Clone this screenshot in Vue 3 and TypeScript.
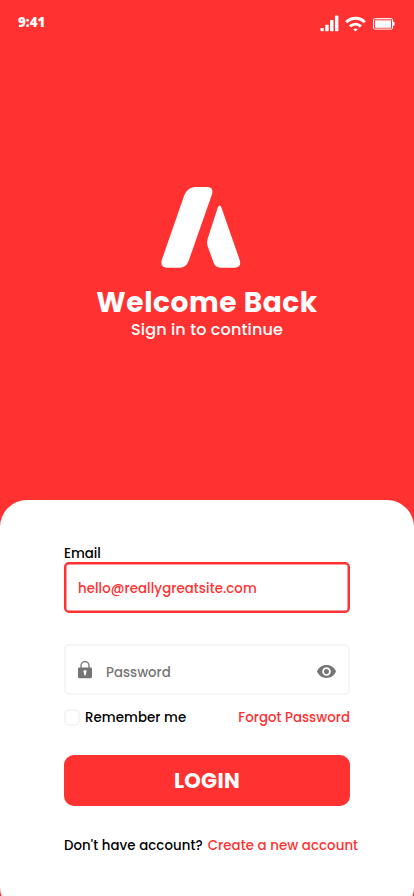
<script setup lang="ts">
import { ref } from 'vue'

const email = ref<string>('hello@reallygreatsite.com')
const remember = ref<boolean>(false)
</script>

<template>
  <main class="screen">
    <header class="status">
      <span class="time">9:41</span>
      <div class="indicators">
        <svg class="signal" width="19" height="17" viewBox="0 0 19 17" fill="#fff">
          <rect x="0.5" y="13" width="3.200" height="3.2" rx="0.6" />
          <rect x="5.3" y="9.8" width="3.400" height="6.4" rx="0.6" />
          <rect x="10.100" y="5" width="3.400" height="11.2" rx="0.6" />
          <rect x="15" y="0.5" width="3.400" height="15.7" rx="0.6" />
        </svg>
        <svg class="wifi" width="21" height="16" viewBox="0 0 21 16" fill="none" stroke="#fff" stroke-width="3">
          <path d="M1.200 6.2C6.3 .9 14.7 .9 19.800 6.2" />
          <path d="M5 10.300c3.2-2.900 7.800-2.900 11 0" />
          <path d="M10.500 15.400 8.300 13.300c1.300-1 3.100-1 4.400 0z" fill="#fff" stroke="none" />
        </svg>
        <svg class="battery" width="22" height="12" viewBox="0 0 22 12">
          <rect x="0.5" y="0.6" width="19" height="10.500" rx="1" fill="none" stroke="#fff" />
          <rect x="1.500" y="1.500" width="17" height="1" fill="#fff" opacity="0.5" />
          <rect x="2" y="2.400" width="16" height="7.300" rx="0.4" fill="#fff" />
          <path d="M20 3.800h.6q1 0 1 1v2q0 1-1 1H20z" fill="#fff" />
        </svg>
      </div>
    </header>

    <section class="hero">
      <svg class="logo" width="80" height="82" viewBox="0 0 80 82" fill="#fff">
        <path d="M34 0H46.500Q52.800.3 51 7.300L27.500 74.300Q25 80.700 19 80.700H6Q-1 80.200.7 73.200L23.300 8.300Q26.500.5 34 0Z" />
        <path d="M56.800 20.500Q58.500 16.500 60.400 20.500L78.900 73.700Q80.500 80.200 74 80.700H59.500Q54.500 80.500 52.600 75.700L46.700 59.200Q45.500 55.200 46.800 51.200Z" />
      </svg>
      <h1 class="title">Welcome Back</h1>
      <p class="subtitle">Sign in to continue</p>
    </section>

    <form class="sheet" @submit.prevent>
      <label class="label">Email</label>
      <div class="field field-active"><span class="email">{{ email }}</span></div>

      <div class="field field-password">
        <svg class="lock" width="14" height="18" viewBox="0 0 14 18">
          <path d="M3 8V4.500a4 4 0 0 1 8 0V8" fill="none" stroke="#757575" stroke-width="1.300" />
          <path d="M1.200 6.500h11.600q1.200 0 1.200 1.200v8.100q0 1.400-1.400 1.400H1.400Q0 17.200 0 15.800V7.700q0-1.200 1.200-1.200z" fill="#757575" />
          <path d="M5.300 10.600a1.700 1.700 0 1 1 3.400 0q0 .8-.8 1.300v2.300H6.100v-2.300q-.8-.5-.8-1.300z" fill="#fff" />
        </svg>
        <span class="placeholder">Password</span>
        <svg class="eye" width="19" height="13" viewBox="1 4.500 22 15" fill="#757575">
          <path d="M12 4.500C7 4.500 2.730 7.610 1 12c1.730 4.390 6 7.500 11 7.500s9.270-3.110 11-7.500c-1.730-4.390-6-7.500-11-7.500zM12 17c-2.760 0-5-2.240-5-5s2.240-5 5-5 5 2.240 5 5-2.240 5-5 5zm0-8c-1.660 0-3 1.340-3 3s1.340 3 3 3 3-1.340 3-3-1.340-3-3-3z" />
        </svg>
      </div>

      <div class="options">
        <span class="check" role="checkbox" :aria-checked="remember" @click="remember = !remember"></span>
        <span class="remember">Remember me</span>
        <a class="forgot">Forgot Password</a>
      </div>

      <button class="login" type="submit"><span>LOGIN</span></button>

      <p class="signup">
        <span class="question">Don't have account?</span>
        <a class="create">Create a new account</a>
      </p>
    </form>
  </main>
</template>

<style>
body {
  margin: 0;
  background: #ff3131;
}
</style>

<style scoped>
.screen {
  width: 414px;
  height: 896px;
  overflow: hidden;
  display: flex;
  flex-direction: column;
  background: #ff3131;
  color: #fff;
  font: 500 13.300px/20px Poppins, Inter, "Open Sans", sans-serif;
  letter-spacing: 0.090px;
  white-space: nowrap;
}
.status {
  flex: none;
  box-sizing: border-box;
  height: 46px;
  padding: 13px 19px 0 18px;
  display: flex;
  justify-content: space-between;
}
.time {
  font: 800 13.300px/19px "Open Sans", sans-serif;
  letter-spacing: 0;
}
.indicators {
  display: flex;
  align-items: flex-start;
}
.signal { margin-top: 2px; }
.wifi { margin: 3px 7px 0 6px; }
.battery { margin-top: 5px; }
.hero {
  flex: none;
  box-sizing: border-box;
  height: 454px;
  padding-top: 141px;
  display: flex;
  flex-direction: column;
  align-items: center;
}
.logo { margin-right: 13px; }
.title {
  margin: 17px 0 0;
  font-size: 28px;
  line-height: 34px;
  font-weight: 700;
  letter-spacing: 0.600px;
}
.subtitle {
  margin: 0;
  font-size: 16px;
  line-height: 20px;
  letter-spacing: 0.130px;
}
.sheet {
  flex: none;
  box-sizing: border-box;
  height: 414px;
  padding: 44px 55px 0 64px;
  border-radius: 27px;
  background: #fff;
  color: #000;
  display: flex;
  flex-direction: column;
}
.label {
  height: 18px;
  letter-spacing: 0;
}
.field {
  box-sizing: border-box;
  width: 286px;
  height: 51px;
  border: 2px solid #f5f5f5;
  border-radius: 5px;
  display: flex;
  align-items: center;
}
.field-active {
  border: 2px solid #ff3131;
  box-shadow: inset 0 0 0 0.500px #ff3131;
  padding: 2px 0 0 12px;
  color: #ff3131;
}
.field-password {
  margin-top: 31px;
  padding: 3px 12px 0;
  color: #757575;
}
.lock { margin-top: -3px; }
.placeholder {
  margin: 3px 0 0 14px;
  letter-spacing: 0;
}
.eye { margin: 1px 0 0 auto; }
.options {
  width: 286px;
  height: 20px;
  margin-top: 13px;
  display: flex;
  align-items: center;
}
.check {
  box-sizing: border-box;
  width: 16px;
  height: 17px;
  margin-top: -1px;
  border: 2px solid #f5f5f5;
  border-radius: 5px;
}
.remember { margin-left: 5px; }
.forgot {
  margin-left: auto;
  color: #ff3131;
  letter-spacing: 0.040px;
}
.login {
  width: 286px;
  height: 51px;
  margin: 27px 0 0;
  padding: 0;
  border: 0;
  border-radius: 10px;
  background: #ff3131;
  color: #fff;
  font: 700 21px/51px Poppins, Inter, sans-serif;
  letter-spacing: 0.3px;
}
.signup {
  margin: 30px 0 0;
  display: flex;
  gap: 5px;
}
.create { color: #ff3131; }
</style>
